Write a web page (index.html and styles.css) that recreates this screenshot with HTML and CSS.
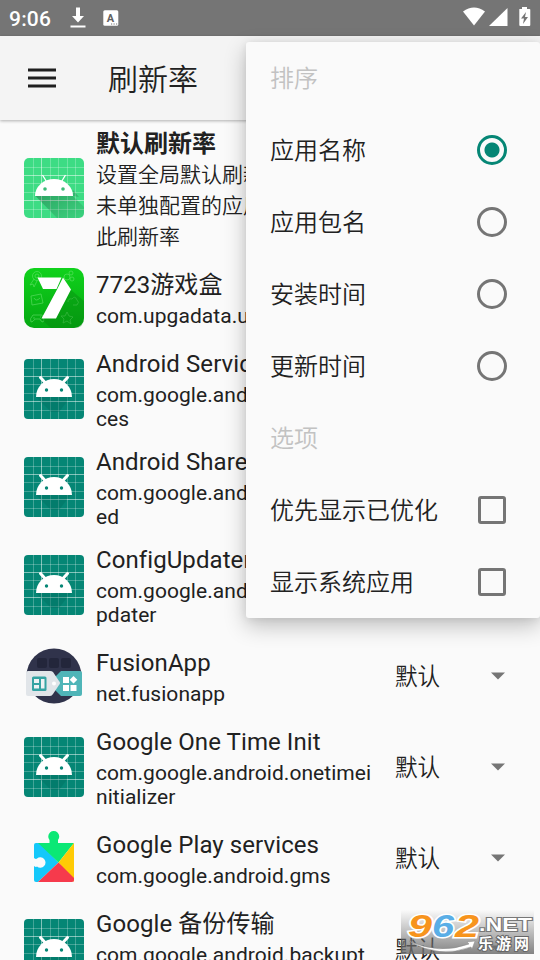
FILE: index.html
```html
<!DOCTYPE html>
<html lang="zh-CN">
<head>
    <meta charset="UTF-8">
    <meta name="viewport" content="width=device-width, initial-scale=1.0">
    <title>刷新率</title>
    <link rel="stylesheet" href="styles.css">
</head>
<body>
<!-- shared icons -->
<svg class="sprite" width="0" height="0">
    <defs>
        <linearGradient id="shade" x1="0" y1="0" x2="1" y2="1">
            <stop offset="0" stop-color="#000" stop-opacity=".28"/>
            <stop offset="1" stop-color="#000" stop-opacity=".04"/>
        </linearGradient>
        <linearGradient id="green" x1="0" y1="0" x2="0" y2="1">
            <stop offset="0" stop-color="#10d21c"/>
            <stop offset="1" stop-color="#05a812"/>
        </linearGradient>
    </defs>
    <symbol id="grid" viewBox="0 0 60 60">
        <path d="M9.500 0v60M26.500 0v60M34.500 0v60M43.500 0v60M51.500 0v60M0 9.500h60M0 25.500h60M0 34.500h60M0 51.500h60" stroke="#fff" stroke-opacity=".25" fill="none"/>
        <path d="M17.500 0v60M0 17.500h60M0 42.500h60" stroke="#fff" stroke-opacity=".5" fill="none"/>
    </symbol>
    <symbol id="android" viewBox="0 0 60 60">
        <rect width="60" height="60" rx="4" fill="#058675"/>
        <use href="#grid"/>
        <path d="M12 38h36l-3 2-10 13H27z" fill="#00695c" opacity=".35"/>
        <path d="M12 38a18 18 0 0 1 36 0z" fill="#fff"/>
        <path d="M16.500 18.500l5.500 6M43.500 18.500l-5.500 6" stroke="#fff" stroke-width="3" stroke-linecap="round"/>
        <circle cx="22.500" cy="31" r="1.700" fill="#058675"/>
        <circle cx="37.500" cy="31" r="1.700" fill="#058675"/>
    </symbol>
    <symbol id="arrow" viewBox="0 0 16 8">
        <path d="M1 .5h14L8 7.500z" fill="#757575"/>
    </symbol>
</svg>

<div class="screen">
    <div class="status-bar">
        <span class="time">9:06</span>
        <svg class="download" width="16" height="22" viewBox="0 0 16 22">
            <path d="M6 .5h4V9h4l-6 6.500L2 9h4z" fill="#fff"/>
            <path d="M.5 19.500h15" stroke="#fff" stroke-width="2"/>
        </svg>
        <svg class="a-box" width="16" height="16" viewBox="0 0 16 16">
            <rect x=".3" y=".3" width="15" height="15.400" rx="1.500" fill="#fff"/>
            <text x="7.400" y="11.500" text-anchor="middle" class="a-letter">A</text>
            <path d="M8 14h1.200M10.500 14h1.200M13 14h1.200" stroke="#757575"/>
        </svg>
        <svg class="signals" width="70" height="22" viewBox="0 0 70 22">
            <path d="M1 4.500Q12 -3.500 23 4.500L12 18.500z" fill="#fff"/>
            <path d="M45.500 1v18H27z" fill="#fff"/>
            <path d="M57.500 2h2.500V0h5v2h2.500q.8 0 .8.800V18q0 1-1 1h-9q-1 0-1-1V2.800q0-.8.200-.8z" fill="#fff"/>
            <path d="M64 5l-5 6.500h3L61 17l5-7h-3z" fill="#757575"/>
        </svg>
    </div>

    <div class="app-bar">
        <svg width="28" height="20" viewBox="0 0 28 20">
            <path d="M0 2h28M0 10h28M0 18h28" stroke="#1f1f1f" stroke-width="3"/>
        </svg>
        <h1>刷新率</h1>
    </div>

    <div class="list">
        <div class="row first">
            <svg class="icon" viewBox="0 0 60 60">
                <rect width="60" height="60" rx="5" fill="#3ddc84"/>
                <use href="#grid"/>
                <path d="M11.500 38H49l6 1-6-7v6l11 11v7q0 4-4 4H33z" fill="url(#shade)"/>
                <path d="M11 38a19 17 0 0 1 38 0z" fill="#fff"/>
                <path d="M18.500 17l4.500 7.500M41.500 17L37 24.500" stroke="#fff" stroke-width="1.300"/>
                <circle cx="21" cy="31" r="1.800" fill="#3dbb78"/>
                <circle cx="39" cy="31" r="1.800" fill="#3dbb78"/>
            </svg>
            <div class="text">
                <div class="name">默认刷新率</div>
                <div class="sub">设置全局默认刷新率，<br>未单独配置的应用将使用<br>此刷新率</div>
            </div>
        </div>
        <div class="row">
            <svg class="icon" viewBox="0 0 60 60">
                <rect width="60" height="60" rx="10" fill="url(#green)"/>
                <g fill="none" stroke="#7be97f" stroke-width=".8" opacity=".6">
                    <circle cx="13" cy="8" r="4.500"/><circle cx="13" cy="8" r="2"/>
                    <path d="M10 11l-4 6 3-1 1 3 3-6"/>
                    <path d="M7 28l10-2 2 9-11 2zM10 30q2 4 6 0"/>
                    <path d="M9 47h9q3 5 1 7-2 0-3-3h-5q-2 3-4 3-2-3 2-7zM10 49v2M16 49h1"/>
                    <circle cx="43" cy="9" r="3"/><circle cx="47" cy="5" r="2"/><circle cx="48" cy="11" r="2"/>
                    <path d="M44 34q0-4 4-3 3-4 5 1 3 2 0 5h-4M43 44l2 4 4 1-3 3 1 4-4-3-4 2 1-4-3-3h4z"/>
                </g>
                <path d="M34 19l4-8 9 11 13 11v17q0 10-10 10H27l-10-9z" fill="#057f0d" opacity=".35"/>
                <path d="M13.500 9.500h24l-5 11.500H19zM39 9.500L47 21.500 32 50.500H17.500L33 21.500z" fill="#fff"/>
            </svg>
            <div class="text">
                <div class="name">7723游戏盒</div>
                <div class="sub">com.upgadata.up7723</div>
            </div>
        </div>
        <div class="row">
            <svg class="icon"><use href="#android"/></svg>
            <div class="text">
                <div class="name">Android Services Library</div>
                <div class="sub">com.google.android.ext.servi<br>ces</div>
            </div>
        </div>
        <div class="row">
            <svg class="icon"><use href="#android"/></svg>
            <div class="text">
                <div class="name">Android Shared Library</div>
                <div class="sub">com.google.android.ext.shar<br>ed</div>
            </div>
        </div>
        <div class="row">
            <svg class="icon"><use href="#android"/></svg>
            <div class="text">
                <div class="name">ConfigUpdater</div>
                <div class="sub">com.google.android.configu<br>pdater</div>
            </div>
        </div>
        <div class="row">
            <svg class="icon" viewBox="0 0 60 60">
                <circle cx="30" cy="30" r="27.500" fill="#30334b"/>
                <g fill="#23263b">
                    <rect x="13" y="12" width="10" height="10" rx="2"/>
                    <rect x="25" y="12" width="10" height="10" rx="2"/>
                    <rect x="37" y="12" width="10" height="10" rx="2"/>
                </g>
                <path d="M37 25h19q2 0 2 2v21q0 2-2 2H37l-7-7V32z" fill="#4fb5b8"/>
                <path d="M4 25h22q2 0 3 1l6 9q2 2 0 4l-6 9q-1 2-3 2H4q-2 0-2-2V27q0-2 2-2z" fill="#e1e5e9"/>
                <rect x="8" y="30.500" width="14.500" height="14.500" rx="1.500" fill="#35a3a3"/>
                <path d="M10 33h5v4h-5zM10 39h5v3.500h-5zM17 33h3.500v9.500H17z" fill="#eef2f4"/>
                <circle cx="30" cy="37.500" r="2" fill="#fff"/>
                <path d="M39 31h6v6h-6zM39 39h6v6h-6zM46.500 39h6v6h-6zM49.500 30l3.800 3.800-3.800 3.800-3.800-3.800z" fill="#fff"/>
            </svg>
            <div class="text">
                <div class="name">FusionApp</div>
                <div class="sub">net.fusionapp</div>
            </div>
            <div class="spinner"><span>默认</span><svg width="16" height="8"><use href="#arrow"/></svg></div>
        </div>
        <div class="row">
            <svg class="icon"><use href="#android"/></svg>
            <div class="text">
                <div class="name">Google One Time Init</div>
                <div class="sub">com.google.android.onetimei<br>nitializer</div>
            </div>
            <div class="spinner"><span>默认</span><svg width="16" height="8"><use href="#arrow"/></svg></div>
        </div>
        <div class="row">
            <svg class="icon" viewBox="0 0 60 60">
                <path d="M12 15h4l18.500 19.500L14 54h-2q-2 0-2-2v-14q2 1.500 3 .5a5.200 5.200 0 1 0 0-8q-1 1-3-.5V17q0-2 2-2z" fill="#14c8fa"/>
                <path d="M14 15h11.500v-3a5.500 5.500 0 1 1 8.500 0v3h16L34.500 34.500z" fill="#0be875"/>
                <path d="M50 15v39L34.500 34.500z" fill="#ffcb05"/>
                <path d="M34.500 34.500L50 50v2q0 2-2 2H14z" fill="#f63a4c"/>
            </svg>
            <div class="text">
                <div class="name">Google Play services</div>
                <div class="sub">com.google.android.gms</div>
            </div>
            <div class="spinner"><span>默认</span><svg width="16" height="8"><use href="#arrow"/></svg></div>
        </div>
        <div class="row">
            <svg class="icon"><use href="#android"/></svg>
            <div class="text">
                <div class="name">Google 备份传输</div>
                <div class="sub">com.google.android.backupt<br>ransport</div>
            </div>
            <div class="spinner"><span>默认</span><svg width="16" height="8"><use href="#arrow"/></svg></div>
        </div>
    </div>

    <div class="menu">
        <div class="menu-item title"><span class="label">排序</span></div>
        <div class="menu-item"><span class="label">应用名称</span><span class="radio checked"></span></div>
        <div class="menu-item"><span class="label">应用包名</span><span class="radio"></span></div>
        <div class="menu-item"><span class="label">安装时间</span><span class="radio"></span></div>
        <div class="menu-item"><span class="label">更新时间</span><span class="radio"></span></div>
        <div class="menu-item title"><span class="label">选项</span></div>
        <div class="menu-item"><span class="label">优先显示已优化</span><span class="checkbox"></span></div>
        <div class="menu-item"><span class="label">显示系统应用</span><span class="checkbox"></span></div>
    </div>

    <svg class="watermark" width="133" height="44" viewBox="0 0 133 44">
        <g class="digits">
            <text x="7" y="27" textLength="24" lengthAdjust="spacingAndGlyphs" fill="#f7941d">9</text>
            <text x="31" y="27" textLength="22" lengthAdjust="spacingAndGlyphs" fill="#5aaee6">6</text>
            <text x="54" y="27" textLength="24" lengthAdjust="spacingAndGlyphs" fill="#f7941d">2</text>
        </g>
        <path d="M8 31q30 14 60 3l-2-2 8-1-3 8-1-2Q38 49 8 31z" fill="#fff" stroke="#888" stroke-width=".5"/>
        <text x="78" y="21" textLength="53" lengthAdjust="spacingAndGlyphs" class="net">.NET</text>
        <text x="77" y="39" textLength="51" class="site">乐游网</text>
    </svg>
</div>
</body>
</html>
```
FILE: styles.css
```css
body {
    margin: 0;
    font-family: Roboto, 'Noto Sans CJK SC', sans-serif;
    background: #fafafa;
    color: #212121;
}
.sprite {
    position: absolute;
}
.screen {
    position: relative;
    width: 540px;
    height: 960px;
    overflow: hidden;
}
.status-bar {
    display: flex;
    align-items: center;
    box-sizing: border-box;
    height: 36px;
    padding: 0 9px 0 9px;
    background: #757575;
    color: #fff;
}
.time {
    width: 61px;
    padding-top: 2px;
    font-size: 21px;
    font-weight: 500;
    letter-spacing: 0.2px;
}
.a-box {
    margin-left: 17px;
}
.a-letter {
    font: 700 11px Roboto, sans-serif;
    fill: #616161;
}
.signals {
    margin: 0 -1px 0 auto;
}
.app-bar {
    position: relative;
    display: flex;
    align-items: center;
    height: 84px;
    padding-left: 28px;
    background: #f4f4f4;
    box-shadow: 0 1px 3px rgba(0, 0, 0, 0.3);
}
.app-bar h1 {
    margin: 0 0 3px 52px;
    font-size: 30px;
    font-weight: 350;
}
.row {
    display: flex;
    align-items: center;
    box-sizing: border-box;
    min-height: 84px;
    padding: 7.5px 24px;
}
.icon {
    flex: none;
    width: 60px;
    height: 60px;
}
.text {
    width: 299px;
    margin-left: 12px;
    white-space: nowrap;
}
.name {
    margin-bottom: 3px;
    font-size: 24px;
    line-height: 32px;
    letter-spacing: 0.08px;
}
.sub {
    font-size: 21px;
    line-height: 24px;
    letter-spacing: 0.05px;
}
.first {
    height: 136px;
}
.first .text {
    padding-top: 4px;
}
.first .name {
    margin-bottom: 0;
    font-weight: 700;
    letter-spacing: 0;
}
.first .sub {
    font-weight: 350;
    line-height: 31px;
    letter-spacing: 0;
}
.spinner {
    display: flex;
    flex: 1;
    align-items: center;
    justify-content: space-between;
    padding-right: 10px;
    font-size: 24px;
    font-weight: 350;
}
.spinner span {
    padding-bottom: 4px;
    transform: scaleX(0.94);
    transform-origin: left;
}
.menu {
    position: absolute;
    top: 42px;
    left: 246px;
    width: 294px;
    height: 576px;
    border-radius: 3px;
    background: #fafafa;
    box-shadow: 0 8px 22px rgba(0, 0, 0, 0.24), 0 1px 8px rgba(0, 0, 0, 0.08);
}
.menu-item {
    display: flex;
    align-items: center;
    justify-content: space-between;
    height: 72px;
    padding: 0 33px 0 24px;
    font-size: 24px;
    font-weight: 350;
}
.label {
    padding-bottom: 4px;
}
.title {
    color: #c2c2c2;
}
.radio {
    box-sizing: border-box;
    width: 30px;
    height: 30px;
    border: 3px solid #757575;
    border-radius: 50%;
}
.checked {
    border-color: #058675;
    background: radial-gradient(circle, #058675 7px, transparent 8px);
}
.checkbox {
    box-sizing: border-box;
    width: 28px;
    height: 28px;
    margin-right: 1px;
    border: 3px solid #757575;
    border-radius: 3px;
}
.watermark {
    position: absolute;
    top: 910px;
    left: 401px;
    background: linear-gradient(rgba(130, 130, 130, 0), rgba(110, 110, 110, 0.85));
}
.digits {
    font: italic 700 32px 'Liberation Sans', sans-serif;
    stroke: #fff;
    stroke-width: 3px;
    paint-order: stroke;
}
.net {
    font: 700 18px 'Liberation Sans', sans-serif;
    fill: #fff;
    stroke: #777;
    stroke-width: 2px;
    paint-order: stroke;
}
.site {
    font: 700 15px 'Noto Sans CJK SC', sans-serif;
    fill: #fff;
    stroke: #666;
    stroke-width: 2px;
    paint-order: stroke;
}
```
